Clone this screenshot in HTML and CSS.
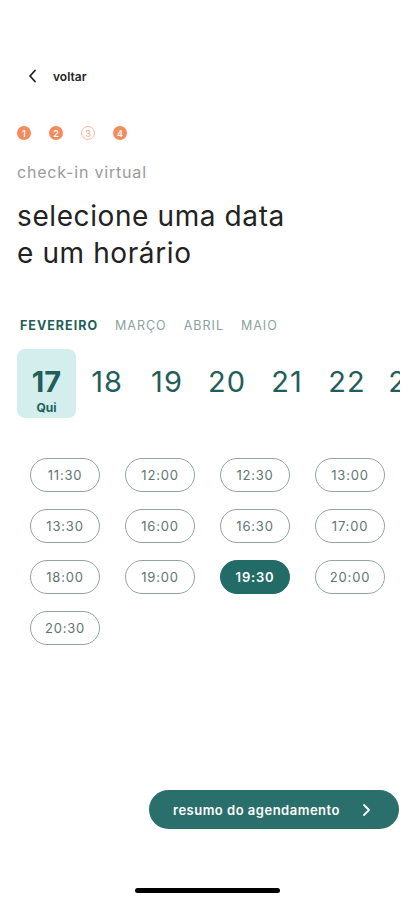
FILE: index.html
```html
<!DOCTYPE html>
<html lang="pt-BR">
<head>
    <meta charset="UTF-8">
    <meta name="viewport" content="width=device-width, initial-scale=1.0">
    <title>Check-in virtual</title>
    <link rel="stylesheet" href="styles.css">
</head>
<body>

    <div class="screen">

        <div class="back">
            <svg class="back-icon" width="12" height="14" viewBox="0 0 12 14">
                <path d="M8 1.5 L3 7 L8 12.5" fill="none" stroke="#222" stroke-width="1.8" stroke-linecap="round" stroke-linejoin="round"/>
            </svg>
            <span>voltar</span>
        </div>

        <div class="steps">
            <span class="step">1</span>
            <span class="step">2</span>
            <span class="step current">3</span>
            <span class="step">4</span>
        </div>

        <p class="eyebrow">check-in virtual</p>
        <h1>selecione uma data<br>e um horário</h1>

        <div class="months">
            <span class="month active">FEVEREIRO</span>
            <span class="month">MARÇO</span>
            <span class="month">ABRIL</span>
            <span class="month">MAIO</span>
        </div>

        <div class="days">
            <div class="day selected">
                <span class="num">17</span>
                <span class="weekday">Qui</span>
            </div>
            <div class="day"><span class="num">18</span></div>
            <div class="day"><span class="num">19</span></div>
            <div class="day"><span class="num">20</span></div>
            <div class="day"><span class="num">21</span></div>
            <div class="day"><span class="num">22</span></div>
            <div class="day"><span class="num">23</span></div>
        </div>

        <div class="times">
            <button class="time">11:30</button>
            <button class="time">12:00</button>
            <button class="time">12:30</button>
            <button class="time">13:00</button>
            <button class="time">13:30</button>
            <button class="time">16:00</button>
            <button class="time">16:30</button>
            <button class="time">17:00</button>
            <button class="time">18:00</button>
            <button class="time">19:00</button>
            <button class="time selected">19:30</button>
            <button class="time">20:00</button>
            <button class="time">20:30</button>
        </div>

        <div class="footer">
            <button class="summary">
                <span>resumo do agendamento</span>
                <svg width="10" height="14" viewBox="0 0 10 14">
                    <path d="M3 2 L8 7 L3 12" fill="none" stroke="#fff" stroke-width="1.8" stroke-linecap="round" stroke-linejoin="round"/>
                </svg>
            </button>
        </div>

        <div class="home-bar"></div>
    </div>

</body>
</html>
```

FILE: styles.css
```css
body {
    margin: 0;
    background-color: #fff;
    font-family: Inter, "Noto Sans", sans-serif;
    color: #222;
}
.screen {
    width: 415px;
    height: 900px;
    overflow: hidden;
    padding-top: 66px;
    box-sizing: border-box;
}
.back {
    display: flex;
    align-items: center;
    height: 20px;
    padding-left: 27px;
    gap: 14px;
    font-size: 12px;
    font-weight: 600;
    color: #222;
}
.steps {
    display: flex;
    gap: 18px;
    padding-left: 17px;
    margin-top: 40px;
}
.step {
    width: 14px;
    height: 14px;
    border-radius: 50%;
    background-color: #f58a5c;
    color: #fff;
    font-size: 9px;
    font-weight: 600;
    display: flex;
    align-items: center;
    justify-content: center;
}
.step.current {
    background-color: #fff;
    border: 1px solid #f8b89b;
    color: #f8b89b;
    width: 12px;
    height: 12px;
}
.eyebrow {
    margin: 22px 0 0;
    padding-left: 17px;
    font-size: 16px;
    line-height: 20px;
    letter-spacing: 0.8px;
    color: #9a9a9a;
}
h1 {
    margin: 16px 0 0;
    padding-left: 17px;
    font-size: 28px;
    font-weight: 400;
    line-height: 37px;
    letter-spacing: 0.6px;
    color: #222;
}
.months {
    display: flex;
    gap: 17px;
    padding-left: 20px;
    margin-top: 46px;
    font-size: 12.5px;
    line-height: 16px;
    letter-spacing: 1px;
}
.month {
    color: #8aa3a1;
}
.month.active {
    color: #1f5e5a;
    font-weight: 700;
}
.days {
    display: flex;
    margin: 15px 15px 0 17px;
    overflow: hidden;
}
.day {
    flex: 0 0 60px;
    height: 69px;
    display: flex;
    flex-direction: column;
    align-items: center;
    padding-top: 17px;
    box-sizing: border-box;
    color: #1f5e5a;
}
.day.selected {
    flex-basis: 59px;
    margin-right: 1px;
    background-color: #d3eeec;
    border-radius: 8px;
}
.num {
    font-size: 29px;
    line-height: 32px;
    letter-spacing: 1px;
}
.selected .num {
    font-weight: 700;
    letter-spacing: 0;
}
.weekday {
    font-size: 12px;
    font-weight: 700;
    line-height: 16px;
    margin-top: 2px;
}
.times {
    display: grid;
    grid-template-columns: repeat(4, 70px);
    column-gap: 25px;
    row-gap: 17px;
    padding-left: 30px;
    margin-top: 40px;
}
.time {
    height: 34px;
    border: 1px solid #93a5a3;
    border-radius: 17px;
    background-color: #fff;
    font-family: Inter, "Noto Sans", sans-serif;
    font-size: 13px;
    letter-spacing: 0.8px;
    color: #5f7573;
    padding: 0;
}
.time.selected {
    background-color: #236b66;
    border-color: #236b66;
    color: #fff;
    font-weight: 600;
}
.footer {
    display: flex;
    justify-content: flex-end;
    padding-right: 16px;
    margin-top: 145px;
}
.summary {
    width: 250px;
    height: 39px;
    border: none;
    border-radius: 20px;
    background-color: #2a6f6b;
    color: #fff;
    font-family: Inter, "Noto Sans", sans-serif;
    font-size: 13px;
    font-weight: 600;
    letter-spacing: 0.5px;
    display: flex;
    align-items: center;
    padding: 0 28px 0 24px;
    justify-content: space-between;
}
.home-bar {
    width: 145px;
    height: 5px;
    border-radius: 3px;
    background-color: #000;
    margin: 59px auto 0;
}
```
